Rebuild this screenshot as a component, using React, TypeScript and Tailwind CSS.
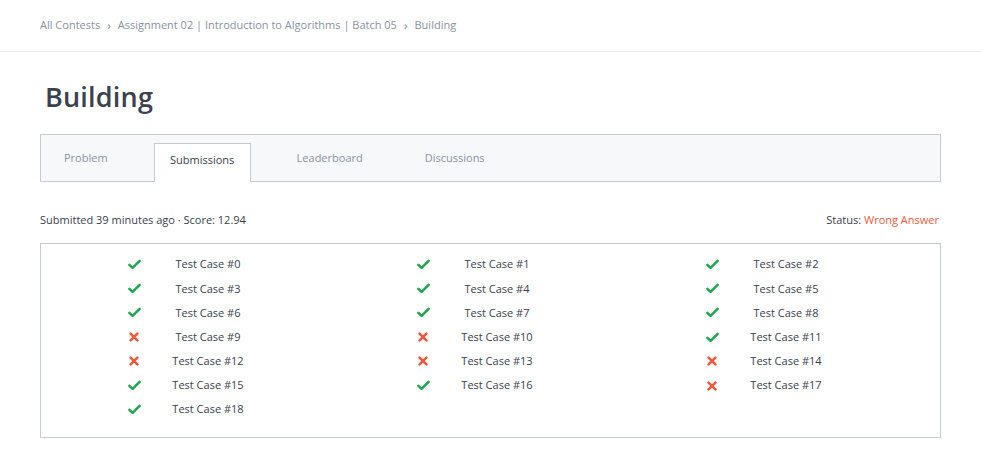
import React from "react";

const cases = [
  true, true, true,
  true, true, true,
  true, true, true,
  false, false, true,
  false, false, false,
  true, true, false,
  true,
];

const tabs = ["Problem", "Submissions", "Leaderboard", "Discussions"];

const Check = () => (
  <svg width="13" height="11" viewBox="0 0 13 11">
    <path d="M1.4 5.8 L4.6 8.8 L11.6 1.9" fill="none" stroke="#1ba94c" strokeWidth="2.5" strokeLinecap="round" strokeLinejoin="round" />
  </svg>
);

const Cross = () => (
  <svg width="10" height="10" viewBox="0 0 10 10">
    <path d="M1.6 1.6 L8.4 8.4 M8.4 1.6 L1.6 8.4" fill="none" stroke="#f05a3b" strokeWidth="2.6" strokeLinecap="round" />
  </svg>
);

const Chevron = () => <span className="mx-[7px] text-[12px] text-[#8a92a0]">›</span>;

export default function App() {
  return (
    <div className="min-h-screen bg-white font-['Open_Sans',sans-serif] text-[#39424e]">
      {/* Breadcrumb */}
      <div className="flex h-[52px] items-center border-b border-[#e6e8ec] px-10 text-[11px] text-[#8a92a0]">
        <span>All Contests</span>
        <Chevron />
        <span>Assignment 02 | Introduction to Algorithms | Batch 05</span>
        <Chevron />
        <span>Building</span>
      </div>

      <div className="px-10">
        <h1 className="ml-[5px] mt-[27px] text-[27px] leading-[36px] font-semibold tracking-[0.2px] text-[#39424e]">Building</h1>

        {/* Tabs */}
        <div className="mt-[19px] flex h-[48px] items-end border border-[#c6cad2] bg-[#f6f8fa] pl-[23px]">
          {tabs.map((t, i) => (
            <div
              key={t}
              className={
                i === 1
                  ? "-mb-px flex h-[39px] w-[97px] items-center justify-center border border-b-0 border-[#c6cad2] bg-white pb-[6px] text-[11px] text-[#39424e]"
                  : i === 0
                  ? "mr-[46px] flex h-[39px] items-center pb-[6px] text-[11px] text-[#8a92a0]"
                  : "ml-[46px] mr-[16px] flex h-[39px] items-center pb-[6px] text-[11px] text-[#8a92a0]"
              }
            >
              {t}
            </div>
          ))}
        </div>

        {/* Summary */}
        <div className="mt-[30px] flex items-center justify-between pr-[2px] text-[11px]">
          <span>Submitted 39 minutes ago · Score: 12.94</span>
          <span>
            Status: <span className="text-[#f05a3b]">Wrong Answer</span>
          </span>
        </div>

        {/* Test cases */}
        <div className="mt-[14px] grid grid-cols-3 border border-[#c6cad2] px-4 pt-[9px] pb-[15px]">
          {cases.map((ok, i) => (
            <div key={i} className="flex h-[24.2px] items-center text-[11px]">
              <div className="ml-[57px] flex w-[40px] justify-center">{ok ? <Check /> : <Cross />}</div>
              <div className="ml-[1px] w-[106px] text-center">Test Case #{i}</div>
            </div>
          ))}
        </div>
      </div>
    </div>
  );
}
